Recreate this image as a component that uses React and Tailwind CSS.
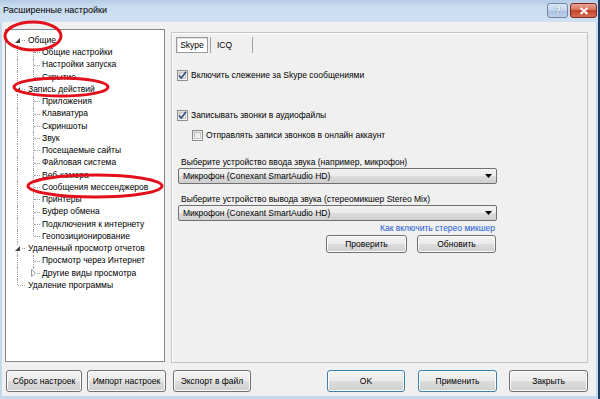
import React from "react";

const tree = [
  { t: "Общие", lvl: 0, exp: "open" },
  { t: "Общие настройки", lvl: 1 },
  { t: "Настройки запуска", lvl: 1 },
  { t: "Скрытие", lvl: 1, last: true },
  { t: "Запись действий", lvl: 0, exp: "open" },
  { t: "Приложения", lvl: 1 },
  { t: "Клавиатура", lvl: 1 },
  { t: "Скриншоты", lvl: 1 },
  { t: "Звук", lvl: 1 },
  { t: "Посещаемые сайты", lvl: 1 },
  { t: "Файловая система", lvl: 1 },
  { t: "Веб-камера", lvl: 1 },
  { t: "Сообщения мессенджеров", lvl: 1 },
  { t: "Принтеры", lvl: 1 },
  { t: "Буфер обмена", lvl: 1 },
  { t: "Подключения к интернету", lvl: 1 },
  { t: "Геопозиционирование", lvl: 1, last: true },
  { t: "Удаленный просмотр отчетов", lvl: 0, exp: "open" },
  { t: "Просмотр через Интернет", lvl: 1 },
  { t: "Другие виды просмотра", lvl: 1, exp: "closed", last: true },
  { t: "Удаление программы", lvl: 0, lastTop: true },
];

const Expander = ({ open }) =>
  open ? (
    <svg width="7" height="7" viewBox="0 0 7 7" className="absolute left-[7px] top-[3px] bg-white">
      <path d="M6 1 L6 6 L1 6 Z" fill="#404040" />
    </svg>
  ) : (
    <svg width="7" height="8" viewBox="0 0 7 8" className="absolute left-[7px] top-[2px] bg-white">
      <path d="M1.5 0.5 L5.5 4 L1.5 7.5 Z" fill="white" stroke="#9a9a9a" />
    </svg>
  );

const TreeRow = ({ row, idx }) => {
  const first = idx === 0;
  return (
    <div className="flex h-[12.25px] items-center">
      {/* root gutter */}
      <div className="relative w-[20px] h-full shrink-0">
        {!row.lastTop && (
          <span
            className={`absolute left-[10px] border-l border-dotted border-[#a0a0a0] ${
              first ? "top-[6px] bottom-0" : "top-0 bottom-0"
            }`}
          />
        )}
        {row.lastTop && (
          <span className="absolute left-[10px] top-0 h-[6px] border-l border-dotted border-[#a0a0a0]" />
        )}
        {row.lvl === 0 && (
          <span className="absolute left-[11px] top-[6px] w-[7px] border-t border-dotted border-[#a0a0a0]" />
        )}
        {row.lvl === 0 && row.exp && <Expander open={row.exp === "open"} />}
      </div>
      {row.lvl === 1 && (
        <div className="relative w-[14px] h-full shrink-0">
          <span
            className={`absolute left-[6px] top-0 border-l border-dotted border-[#a0a0a0] ${
              row.last ? "h-[6px]" : "bottom-0"
            }`}
          />
          <span className="absolute left-[7px] top-[6px] w-[6px] border-t border-dotted border-[#a0a0a0]" />
          {row.exp && (
            <svg width="7" height="8" viewBox="0 0 7 8" className="absolute left-[3px] top-[2px] bg-white">
              <path d="M1.5 0.5 L5.5 4 L1.5 7.5 Z" fill="white" stroke="#9a9a9a" />
            </svg>
          )}
        </div>
      )}
      <span className="pl-[1px] whitespace-nowrap leading-none">{row.t}</span>
    </div>
  );
};

const Check = ({ checked }) => (
  <span className="w-[11px] h-[11px] border border-[#8e8f8f] bg-gradient-to-br from-[#dcdcdc] to-[#ffffff] flex items-center justify-center shrink-0">
    <span className="w-[7px] h-[7px] border border-[#c4c4c4] bg-gradient-to-br from-[#e2e2e2] to-[#fafafa] flex items-center justify-center">
      {checked && (
        <svg width="9" height="9" viewBox="0 0 9 9" className="overflow-visible">
          <path d="M1 4.5 L3.4 7 L8 0.8" fill="none" stroke="#2b4f82" strokeWidth="1.6" />
        </svg>
      )}
    </span>
  </span>
);

const WinButton = ({ children, def, className = "" }) => (
  <button
    className={`h-[22px] rounded-[3px] border ${
      def ? "border-[#3c7fb1]" : "border-[#707070]"
    } bg-[linear-gradient(#f2f2f2_0%,#ebebeb_49%,#dddddd_50%,#cfcfcf_100%)] shadow-[inset_0_0_0_1px_#fcfcfc] text-[8.5px] text-black flex items-center justify-center ${className}`}
  >
    {children}
  </button>
);

const Select = ({ value }) => (
  <div className="ml-[1px] w-[319px] h-[16px] rounded-[2px] border border-[#707070] bg-[linear-gradient(#f2f2f2_0%,#ebebeb_49%,#dddddd_50%,#cfcfcf_100%)] flex items-center justify-between pl-[4px] pr-[4px]">
    <span className="leading-none">{value}</span>
    <svg width="7" height="4" viewBox="0 0 7 4">
      <path d="M0 0 H7 L3.5 4 Z" fill="#000" />
    </svg>
  </div>
);

export default function App() {
  return (
    <div className="relative w-[600px] h-[399px] overflow-hidden bg-[#1d3f66] font-['Liberation_Sans',Arial,sans-serif] text-[8.5px] text-black">
      <div className="w-[598px] h-[399px] flex flex-col bg-[#c4d8ee] px-[2px] pb-[3px]">
        {/* title bar */}
        <div className="h-[22px] shrink-0 flex items-start justify-between bg-[linear-gradient(#b4cbe6,#c9dcf0_30%,#cfe0f2)] -mx-[2px] px-[3px]">
          <span className="mt-[6px] text-[9px] leading-none text-black">Расширенные настройки</span>
          <div className="flex gap-[2px] mt-[3px] mr-[-2px]">
            <div className="w-[21px] h-[15px] rounded-[3px] border border-[#6f86a3] bg-[linear-gradient(#dbe7f5_0%,#c3d5ec_50%,#a9c0de_51%,#bed1ea_100%)] flex items-center justify-center text-white text-[11px] font-bold leading-none [text-shadow:0_0_1px_#2c4a6e]">
              ?
            </div>
            <div className="w-[27px] h-[15px] rounded-[3px] border border-[#7a2a22] bg-[linear-gradient(#e8a493_0%,#d9755f_45%,#c7432d_50%,#d66b50_100%)] flex items-center justify-center">
              <svg width="10" height="8" viewBox="0 0 10 8">
                <path d="M1.5 1 L8.5 7 M8.5 1 L1.5 7" stroke="#fff" strokeWidth="2" />
              </svg>
            </div>
          </div>
        </div>

        {/* client */}
        <div className="flex-1 bg-[#f0f0f0] pl-[3px] pt-[7px] flex flex-col">
          <div className="flex gap-[6px]">
            {/* tree */}
            <div className="w-[160px] h-[333px] bg-white border border-[#828790] pt-[4px] pl-[1px]">
              {tree.map((r, i) => (
                <TreeRow key={i} row={r} idx={i} />
              ))}
            </div>

            {/* right panel */}
            <div className="mt-[3px] w-[417px] h-[331px] border border-[#c5c5c5] shadow-[inset_1px_1px_0_#fff] pl-[5px] flex flex-col">
              <div className="mt-[4px] -ml-[1px] h-[16px] flex items-stretch">
                <div className="w-[32px] border border-[#9a9a9a] bg-white shadow-[inset_1px_1px_0_#e0e0e0] flex items-center justify-center">
                  Skype
                </div>
                <div className="ml-[2px] border-l border-[#a0a0a0] w-[42px] pl-[6px] flex items-center">ICQ</div>
                <div className="border-l border-[#a0a0a0]" />
              </div>

              <div className="mt-[16px] h-[12px] flex items-center gap-[3px]">
                <Check checked />
                <span>Включить слежение за Skype сообщениями</span>
              </div>
              <div className="mt-[28px] h-[12px] flex items-center gap-[3px]">
                <Check checked />
                <span>Записывать звонки в аудиофайлы</span>
              </div>
              <div className="mt-[8px] ml-[15px] h-[12px] flex items-center gap-[3px]">
                <Check />
                <span>Отправлять записи звонков в онлайн аккаунт</span>
              </div>

              <div className="mt-[16px] ml-[4px] h-[11px] flex items-center">
                Выберите устройство ввода звука (например, микрофон)
              </div>
              <Select value="Микрофон (Conexant SmartAudio HD)" />

              <div className="mt-[10px] ml-[4px] h-[11px] flex items-center">
                Выберите устройство вывода звука (стереомикшер Stereo Mix)
              </div>
              <Select value="Микрофон (Conexant SmartAudio HD)" />

              <div className="ml-[1px] w-[319px] mt-[2px] h-[11px] flex items-center justify-end pr-[2px] text-[#1a5ad6]">
                Как включить стерео микшер
              </div>
              <div className="ml-[1px] w-[319px] mt-[1px] flex justify-end gap-[10px] pr-[1px]">
                <WinButton className="w-[81px] !h-[18px]">Проверить</WinButton>
                <WinButton className="w-[79px] !h-[18px]">Обновить</WinButton>
              </div>
            </div>
          </div>

          {/* bottom buttons */}
          <div className="mt-[7px] flex">
            <WinButton className="ml-[1px] w-[76px]">Сброс настроек</WinButton>
            <WinButton className="ml-[5px] w-[79px]">Импорт настроек</WinButton>
            <WinButton className="ml-[7px] w-[78px]">Экспорт в файл</WinButton>
            <WinButton def className="ml-[76px] w-[78px]">OK</WinButton>
            <WinButton def className="ml-[13px] w-[79px]">Применить</WinButton>
            <WinButton className="ml-[12px] w-[79px]">Закрыть</WinButton>
          </div>
        </div>
      </div>

      {/* red annotation ellipses */}
      <svg width="600" height="399" className="absolute left-0 top-0 pointer-events-none">
        <ellipse cx="33" cy="36" rx="28" ry="14" fill="none" stroke="#e3101b" strokeWidth="3" />
        <ellipse cx="61" cy="87" rx="47" ry="9" fill="none" stroke="#e3101b" strokeWidth="3" />
        <ellipse cx="95" cy="186" rx="67" ry="11" fill="none" stroke="#e3101b" strokeWidth="3" />
      </svg>
    </div>
  );
}
